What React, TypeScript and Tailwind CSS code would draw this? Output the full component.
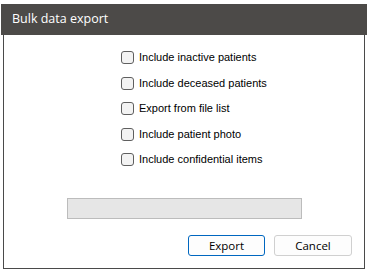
import React from 'react'

const options = [
  'Include inactive patients',
  'Include deceased patients',
  'Export from file list',
  'Include patient photo',
  'Include confidential items',
]

function CheckRow({ label }: { label: string }) {
  return (
    <label className="flex items-center h-[17px] gap-[5px]">
      <span className="w-[13px] h-[13px] rounded-[3px] border border-[#5f5f5f] bg-[#f3f3f3]" />
      <span className="text-[11px] text-black leading-none">{label}</span>
    </label>
  )
}

export default function App() {
  return (
    <div className="w-[368px] h-[272px] bg-white pt-[4px] pl-[1px] font-['Liberation_Sans',Arial,sans-serif]">
      <div className="w-[366px] h-[31px] bg-[#4c4a48] flex items-center pl-[11px]">
        <span className="text-white text-[12.5px] font-['Open_Sans',sans-serif] leading-none">Bulk data export</span>
      </div>
      <div className="ml-[2px] w-[362px] h-[234px] border-x-[1.5px] border-b-[1.5px] border-[#4a4a4a] flex flex-col">
        <div className="flex flex-col gap-[8.5px] pl-[117px] pt-[14px]">
          {options.map((o) => (
            <CheckRow key={o} label={o} />
          ))}
        </div>
        <div className="ml-[63px] mt-[30px] w-[235px] h-[21px] border border-[#bcbcbc] bg-[#e6e6e6]" />
        <div className="flex justify-end gap-[9px] pr-[12px] mt-[16px]">
          <button
            type="button"
            className="w-[77px] h-[21px] rounded-[3px] border border-[#0067c0] bg-[#fdfdfd] text-[11.5px] text-black font-['Open_Sans',sans-serif]"
          >
            Export
          </button>
          <button
            type="button"
            className="w-[78px] h-[21px] rounded-[3px] border border-[#d0d0d0] bg-[#fdfdfd] text-[11.5px] text-black font-['Open_Sans',sans-serif]"
          >
            Cancel
          </button>
        </div>
      </div>
    </div>
  )
}
